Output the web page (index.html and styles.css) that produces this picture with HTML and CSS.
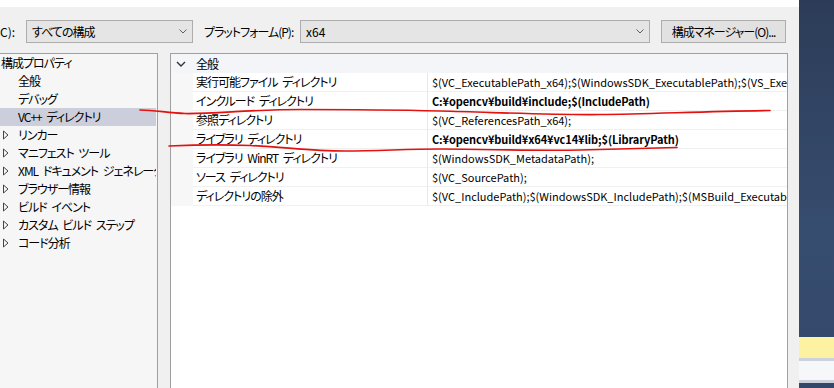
FILE: index.html
```html
<!DOCTYPE html>
<html lang="ja">
<head>
    <meta charset="UTF-8">
    <title>プロパティ ページ</title>
    <link rel="stylesheet" href="styles.css">
</head>
<body>
<div class="screen">
    <div class="dialog">
        <div class="title-strip"></div>

        <div class="toolbar">
            <span class="label label-cut">C):</span>
            <div class="combo combo-config">
                <span>すべての構成</span>
                <svg class="chev" width="8" height="5" viewBox="0 0 8 5"><polyline points="0.5,0.5 4,4 7.5,0.5"/></svg>
            </div>
            <span class="label label-platform">プラットフォーム(P):</span>
            <div class="combo combo-platform">
                <span>x64</span>
                <svg class="chev" width="8" height="5" viewBox="0 0 8 5"><polyline points="0.5,0.5 4,4 7.5,0.5"/></svg>
            </div>
            <div class="btn">構成マネージャー(O)...</div>
        </div>

        <div class="panes">
            <ul class="tree">
                <li class="node root">構成プロパティ</li>
                <li class="node">全般</li>
                <li class="node">デバッグ</li>
                <li class="node selected">VC++ ディレクトリ</li>
                <li class="node folder"><svg class="tri" width="6" height="10" viewBox="0 0 6 10"><polygon points="0.5,1 5,5 0.5,9"/></svg>リンカー</li>
                <li class="node folder"><svg class="tri" width="6" height="10" viewBox="0 0 6 10"><polygon points="0.5,1 5,5 0.5,9"/></svg>マニフェスト ツール</li>
                <li class="node folder"><svg class="tri" width="6" height="10" viewBox="0 0 6 10"><polygon points="0.5,1 5,5 0.5,9"/></svg>XML ドキュメント ジェネレーター</li>
                <li class="node folder"><svg class="tri" width="6" height="10" viewBox="0 0 6 10"><polygon points="0.5,1 5,5 0.5,9"/></svg>ブラウザー情報</li>
                <li class="node folder"><svg class="tri" width="6" height="10" viewBox="0 0 6 10"><polygon points="0.5,1 5,5 0.5,9"/></svg>ビルド イベント</li>
                <li class="node folder"><svg class="tri" width="6" height="10" viewBox="0 0 6 10"><polygon points="0.5,1 5,5 0.5,9"/></svg>カスタム ビルド ステップ</li>
                <li class="node folder"><svg class="tri" width="6" height="10" viewBox="0 0 6 10"><polygon points="0.5,1 5,5 0.5,9"/></svg>コード分析</li>
            </ul>

            <div class="grid">
                <div class="group">
                    <svg class="group-chev" width="10" height="6" viewBox="0 0 10 6"><polyline points="1,1 5,5 9,1"/></svg>
                    <span>全般</span>
                </div>
                <div class="row">
                    <div class="name">実行可能ファイル ディレクトリ</div>
                    <div class="value">$(VC_ExecutablePath_x64);$(WindowsSDK_ExecutablePath);$(VS_ExecutablePath);$(MSBuild_ExecutablePath)</div>
                </div>
                <div class="row">
                    <div class="name">インクルード ディレクトリ</div>
                    <div class="value bold">C:¥opencv¥build¥include;$(IncludePath)</div>
                </div>
                <div class="row">
                    <div class="name">参照ディレクトリ</div>
                    <div class="value">$(VC_ReferencesPath_x64);</div>
                </div>
                <div class="row">
                    <div class="name">ライブラリ ディレクトリ</div>
                    <div class="value bold">C:¥opencv¥build¥x64¥vc14¥lib;$(LibraryPath)</div>
                </div>
                <div class="row">
                    <div class="name">ライブラリ WinRT ディレクトリ</div>
                    <div class="value">$(WindowsSDK_MetadataPath);</div>
                </div>
                <div class="row">
                    <div class="name">ソース ディレクトリ</div>
                    <div class="value">$(VC_SourcePath);</div>
                </div>
                <div class="row">
                    <div class="name">ディレクトリの除外</div>
                    <div class="value">$(VC_IncludePath);$(WindowsSDK_IncludePath);$(MSBuild_ExecutablePath);$(VC_LibraryPath_x64)</div>
                </div>
            </div>
        </div>
    </div>

    <div class="backdrop">
        <div class="band-yellow"></div>
        <div class="band-line"></div>
        <div class="band-white"></div>
        <div class="band-line"></div>
    </div>

    <!-- red pen marks drawn over the screenshot -->
    <svg class="marks" width="834" height="388" viewBox="0 0 834 388">
        <path d="M140,110 C155,110 168,113 185,113.5 C215,114 250,109.5 300,109.5 C350,109.5 400,110 440,111 C500,112.5 550,115 600,114.5 C650,114 700,111.5 770,110.5"/>
        <path d="M169,146 C190,145 215,144 250,145.5 C285,147 310,151 345,151 C380,151 405,149 440,149 C500,149.5 540,151 580,150 C620,149 650,148 677,147.5"/>
    </svg>
</div>
</body>
</html>
```

FILE: styles.css
```css
body {
    margin: 0;
    font-family: "Noto Sans CJK JP", "Noto Sans", sans-serif;
    font-size: 12px;
    font-feature-settings: "palt";
    letter-spacing: -1px;
    word-spacing: 3px;
    color: #000;
}

.screen {
    position: relative;
    width: 834px;
    height: 388px;
    overflow: hidden;
    display: flex;
    background: #f0f0f0;
}

.dialog {
    width: 799px;
    display: flex;
    flex-direction: column;
    background: #f0f0f0;
}

.title-strip {
    height: 7px;
    background: #fff;
}

/* top toolbar */
.toolbar {
    display: flex;
    align-items: center;
    height: 23px;
    margin-top: 13px;
}

.label {
    white-space: nowrap;
}
.label-cut {
    width: 26px;
    letter-spacing: 0;
}
.label-platform {
    width: 96px;
    margin-left: 11px;
}

.combo {
    box-sizing: border-box;
    height: 23px;
    display: flex;
    align-items: center;
    justify-content: space-between;
    padding: 0 5px 0 5px;
    background: #e5e5e5;
    border: 1px solid #adadad;
}
.combo-config {
    width: 167px;
}
.combo-platform {
    width: 350px;
    letter-spacing: 0;
}
.chev {
    fill: none;
    stroke: #606060;
    stroke-width: 1;
}

.btn {
    box-sizing: border-box;
    width: 125px;
    height: 23px;
    margin-left: 11px;
    display: flex;
    align-items: center;
    justify-content: center;
    background: #e1e1e1;
    border: 1px solid #adadad;
}

/* panes */
.panes {
    flex: 1;
    display: flex;
    margin-top: 10px;
}

.tree {
    box-sizing: border-box;
    width: 159px;
    margin: 0 12px 0 -1px;
    padding: 0 1px 0 0;
    list-style: none;
    background: #f6f6f6;
    border: 1px solid #a0a0a0;
    border-bottom: none;
}

.node {
    height: 18px;
    line-height: 18px;
    padding-left: 18px;
    white-space: nowrap;
    overflow: hidden;
    position: relative;
}
.node.root {
    padding-left: 1px;
}
.node.selected {
    background: #cccedb;
}
.tri {
    position: absolute;
    left: 3px;
    top: 4px;
    fill: none;
    stroke: #444;
    stroke-width: 1;
}

.grid {
    box-sizing: border-box;
    width: 618px;
    background: #fff;
    border: 1px solid #a0a0a0;
    border-bottom: none;
}

.group {
    height: 19px;
    display: flex;
    align-items: center;
    background: #f3f5f8;
}
.group-chev {
    margin-left: 5px;
    fill: none;
    stroke: #333;
    stroke-width: 1.4;
}
.group span {
    margin-left: 10px;
}

.row {
    height: 19px;
    display: flex;
    padding-left: 22px;
    background: #f7f7f7;
}
.name,
.value {
    box-sizing: border-box;
    height: 19px;
    line-height: 18px;
    background: #fff;
    border-bottom: 1px solid #f0f0f0;
    white-space: nowrap;
    overflow: hidden;
}
.name {
    width: 235px;
    padding-left: 3px;
    border-right: 1px solid #e8e8e8;
}
.value {
    flex: 1;
    padding-left: 4px;
    font-size: 11px;
    letter-spacing: 0;
    word-spacing: 0;
}
.value.bold {
    font-weight: bold;
    letter-spacing: -0.1px;
}

/* window behind the dialog */
.backdrop {
    flex: 1;
    display: flex;
    flex-direction: column;
    background: linear-gradient(#2c3c58, #374d6f 60%, #33476a);
}
.band-yellow {
    margin-top: 337px;
    height: 21px;
    background: #fdf1a2;
}
.band-line {
    height: 3px;
    background: #cdd1dc;
}
.band-white {
    height: 19px;
    background: #f6f7f9;
}

.marks {
    position: absolute;
    left: 0;
    top: 0;
    pointer-events: none;
    fill: none;
    stroke: #e3120f;
    stroke-width: 1.7;
    stroke-linecap: round;
}
```
